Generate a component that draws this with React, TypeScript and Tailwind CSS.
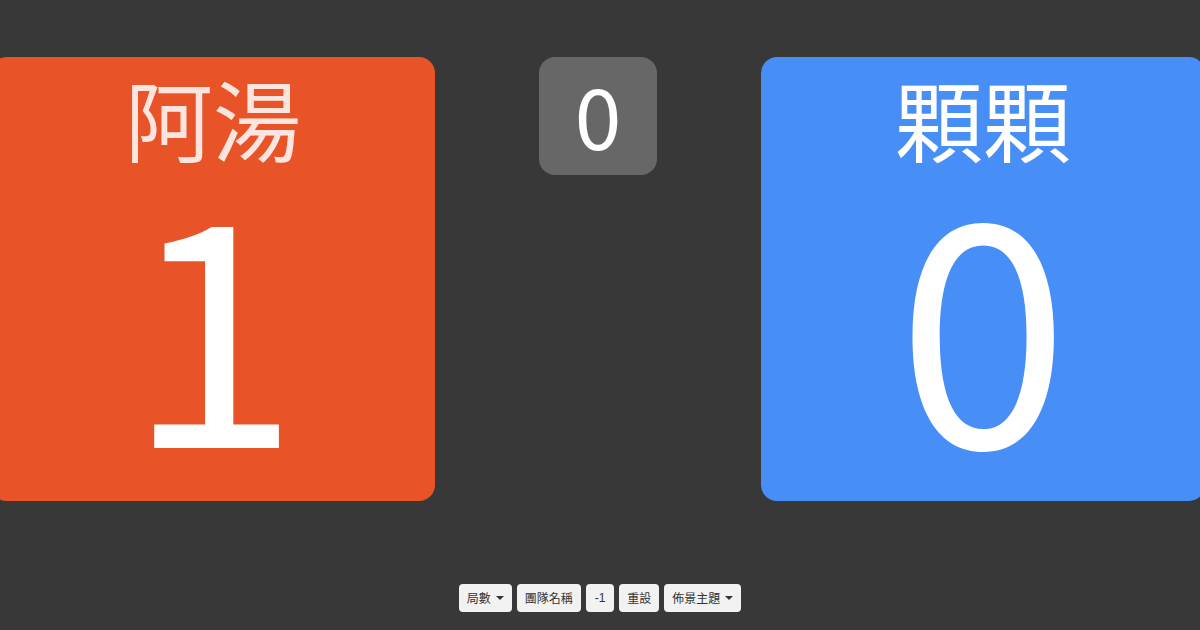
import React from 'react';

interface TeamCardProps {
  name: string;
  score: number;
  color: string;
  nameClass: string;
}

const TeamCard: React.FC<TeamCardProps> = ({ name, score, color, nameClass }) => (
  <div
    className={`w-[444px] h-[444px] shrink-0 rounded-2xl flex flex-col items-center ${color}`}
  >
    <div className={`mt-[16px] text-[88px] leading-none ${nameClass}`}>{name}</div>
    <div className="mt-[12px] text-[310px] leading-[280px] text-white">{score}</div>
  </div>
);

const Caret = () => (
  <span className="inline-block ml-[5px] w-0 h-0 border-x-[4px] border-x-transparent border-t-[4px] border-t-[#333] align-middle" />
);

const ToolButton: React.FC<{ children: React.ReactNode; caret?: boolean }> = ({ children, caret }) => (
  <button className="h-[28px] px-[8px] rounded-[4px] bg-[#f2f2f2] text-[#333] text-[12px] flex items-center">
    {children}
    {caret && <Caret />}
  </button>
);

export default function App() {
  return (
    <div
      className="w-[1200px] h-[630px] overflow-hidden bg-[#383838] flex flex-col"
      style={{ fontFamily: '"Noto Sans CJK TC", "Noto Sans CJK SC", sans-serif' }}
    >
      {/* score row */}
      <div className="flex items-start pt-[57px] -ml-[9px] w-[1214px]">
        <TeamCard name="阿湯" score={1} color="bg-[#e85428]" nameClass="text-white/85" />
        <div className="flex-1 flex justify-center">
          <div className="w-[118px] h-[118px] pb-[4px] rounded-2xl bg-[#676767] flex items-center justify-center text-[84px] leading-none text-white">
            0
          </div>
        </div>
        <TeamCard name="顆顆" score={0} color="bg-[#478ef6]" nameClass="text-white" />
      </div>

      {/* controls */}
      <div className="mt-auto mb-[18px] flex justify-center gap-[5px]">
        <ToolButton caret>局數</ToolButton>
        <ToolButton>團隊名稱</ToolButton>
        <ToolButton>
          <span className="px-[1px]" style={{ fontFamily: '"Liberation Sans", sans-serif' }}>-1</span>
        </ToolButton>
        <ToolButton>重設</ToolButton>
        <ToolButton caret>佈景主題</ToolButton>
      </div>
    </div>
  );
}
